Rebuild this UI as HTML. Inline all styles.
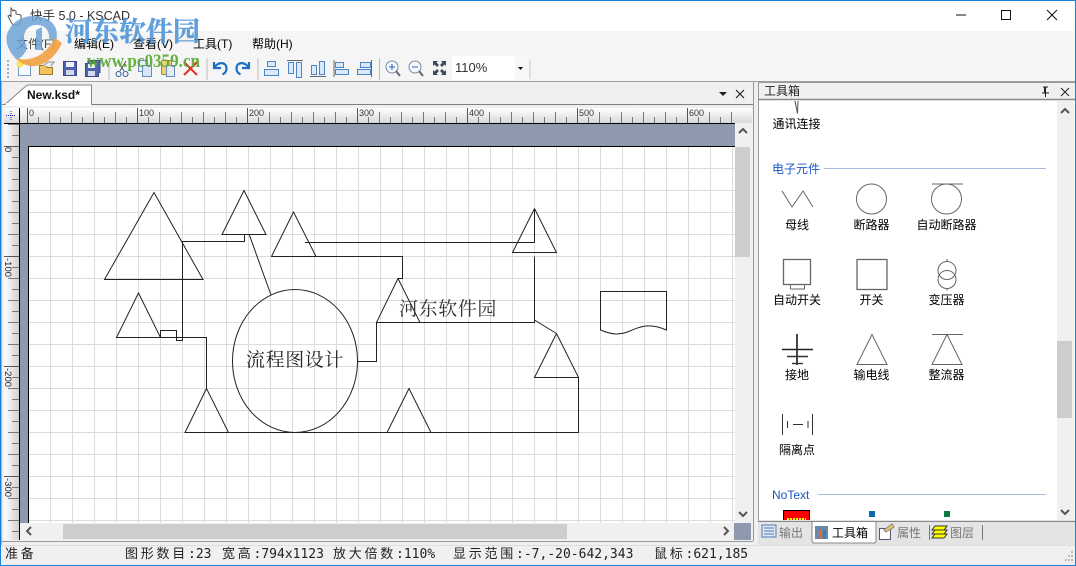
<!DOCTYPE html>
<html><head><meta charset="utf-8"><style>
html,body{margin:0;padding:0;background:#fff;width:1076px;height:566px;overflow:hidden}
svg{display:block}
text{font-family:"Liberation Sans","WenQuanYi Zen Hei","Noto Sans CJK SC",sans-serif;font-size:12px;fill:#000}
.m{font-family:"DejaVu Sans Mono","Liberation Mono","WenQuanYi Zen Hei",monospace;font-size:13px;fill:#222}
.z{letter-spacing:2.750px}
.s{fill:none;stroke:#222;stroke-width:1}
.i{fill:none;stroke:#666;stroke-width:1}
.c{text-anchor:middle}
</style></head><body>
<svg width="1076" height="566" viewBox="0 0 1076 566" xmlns="http://www.w3.org/2000/svg">
<defs>
<linearGradient id="rt" x1="0" y1="0" x2="0" y2="1"><stop offset="0" stop-color="#fff"/><stop offset="1" stop-color="#d8d8d8"/></linearGradient>
<linearGradient id="rl" x1="0" y1="0" x2="1" y2="0"><stop offset="0" stop-color="#fff"/><stop offset="1" stop-color="#d0d0d0"/></linearGradient>
<pattern id="grid" x="29" y="147" width="22" height="22" patternUnits="userSpaceOnUse"><rect x="21" y="0" width="1" height="22" fill="#dcdcdc"/><rect x="0" y="21" width="22" height="1" fill="#dcdcdc"/></pattern>
</defs>

<!-- window -->
<rect width="1076" height="566" fill="#f0f0f0"/>
<rect x="0" y="0" width="1076" height="31" fill="#fff"/>
<rect x="0" y="31" width="1076" height="50" fill="#f5f5f5"/>
<rect x="0" y="81" width="1076" height="1" fill="#a0a0a0"/>

<!-- title -->
<path d="M11,8v9l-1-2-2,1 3,6 2,3h6l2-4v-6l-5-1v-3l-2-1-1,1z" fill="#fff" stroke="#555"/>
<text x="30" y="20" style="font-size:12.500px;fill:#333">快手 5.0 - KSCAD</text>
<path d="M956,15h10" stroke="#111" stroke-width="1"/>
<rect x="1001.500" y="10.500" width="9" height="9" fill="none" stroke="#111"/>
<path d="M1047,10l10,10M1057,10l-10,10" stroke="#111" fill="none"/>

<!-- menu -->
<text x="16" y="48" style="fill:#444">文件(F)</text>
<text x="74" y="48">编辑(E)</text>
<text x="133" y="48">查看(V)</text>
<text x="193" y="48">工具(T)</text>
<text x="252" y="48">帮助(H)</text>

<!-- toolbar -->
<path d="M8,60v18" stroke="#aaa" stroke-width="2" stroke-dasharray="2 2"/>
<path d="M18.500,61.500h9l3,3v11h-12z" fill="#f4f8ff" stroke="#7a9cc8"/><circle cx="20" cy="64" r="3.500" fill="#ffe35a"/>
<path d="M39.500,65.500h6l2,2h5v7h-13z" fill="#f2c25c" stroke="#9a7a2a"/><path d="M43,66l5-4h6l-3,4" fill="#eee" stroke="#888"/>
<path d="M63.500,61.500h13v14h-13z" fill="#4f62ae" stroke="#3a4a88"/><rect x="66" y="62" width="8" height="5" fill="#eef1fb"/><rect x="66" y="70" width="8" height="5" fill="#d5d9ee"/>
<path d="M85.500,63.500h13v13h-13z" fill="#4f62ae" stroke="#3a4a88"/><path d="M88,63v-2.500h12v12h-2" fill="#4f62ae" stroke="#3a4a88"/><rect x="88" y="64" width="7" height="4" fill="#eef1fb"/><rect x="88" y="71" width="7" height="5" fill="#d5d9ee"/>
<path d="M109,58v22" stroke="#bbb"/>
<path d="M118,61l6,10M126,61l-6,10" stroke="#555" fill="none"/><circle cx="118.500" cy="74" r="2.500" fill="none" stroke="#2a5a9a"/><circle cx="125.500" cy="74" r="2.500" fill="none" stroke="#2a5a9a"/>
<rect x="138.500" y="60.500" width="9" height="11" fill="#e8f0fa" stroke="#6a8ab8"/><rect x="142.500" y="65.500" width="9" height="11" fill="#d8e6f8" stroke="#6a8ab8"/>
<rect x="161.500" y="60.500" width="10" height="14" rx="1" fill="#f0d070" stroke="#a08a30"/><rect x="166.500" y="65.500" width="8" height="11" fill="#e0ecfa" stroke="#6a8ab8"/>
<path d="M184,62l13,13M197,62l-13,13" stroke="#e03020" stroke-width="2" fill="none"/>
<path d="M207,58v22" stroke="#bbb"/>
<path d="M214,62v6h7M214.500,67.500c3-6 12-6 12,1 0,3-2,5-4,6" fill="none" stroke="#1f6fc0" stroke-width="2.200"/>
<path d="M249,62v6h-7M248.500,67.500c-3-6-12-6-12,1 0,3 2,5 4,6" fill="none" stroke="#1f6fc0" stroke-width="2.200"/>
<path d="M258,58v22" stroke="#bbb"/>
<g fill="#dbe9fa" stroke="#4a86c8">
<rect x="267.500" y="61.500" width="8" height="5"/><rect x="264.500" y="69.500" width="14" height="6"/>
<rect x="288.500" y="62.500" width="5" height="11"/><rect x="296.500" y="62.500" width="5" height="15"/>
<rect x="311.500" y="65.500" width="5" height="9"/><rect x="319.500" y="61.500" width="5" height="13"/>
<rect x="335.500" y="62.500" width="8" height="5"/><rect x="335.500" y="69.500" width="13" height="5"/>
<rect x="360.500" y="62.500" width="10" height="5"/><rect x="357.500" y="69.500" width="13" height="5"/>
</g>
<path d="M287,60.500h16M310,76.500h16M334,60v17M371.500,60v17" stroke="#666" fill="none"/>
<path d="M379.500,58v22" stroke="#bbb"/>
<circle cx="392" cy="67" r="6" fill="#f4f8ff" stroke="#7a8aa0"/><path d="M389,67h6M392,64v6" stroke="#2a5ab0"/><path d="M396,71l4,5" stroke="#667" stroke-width="2"/>
<circle cx="415" cy="67" r="6" fill="#f4f8ff" stroke="#7a8aa0"/><path d="M412,67h6" stroke="#2a5ab0"/><path d="M419,71l4,5" stroke="#667" stroke-width="2"/>
<path d="M433,61h5l-1.500,1.500 2.500,2.500-2,2-2.500-2.500-1.500,1.500zM446,61h-5l1.500,1.500-2.500,2.500 2,2 2.500-2.500 1.500,1.500zM433,75h5l-1.500-1.500 2.500-2.500-2-2-2.500,2.500-1.500-1.500zM446,75h-5l1.500-1.500-2.500-2.500 2-2 2.500,2.500 1.500-1.500z" fill="#3e4a56"/>
<rect x="452" y="56" width="76" height="24" fill="#fff"/>
<rect x="515" y="56" width="13" height="24" fill="#f7f7f7"/>
<text x="455" y="72" style="font-size:13px;fill:#333">110%</text>
<path d="M518,67h5l-2.500,3z" fill="#111"/>
<path d="M530,60v19" stroke="#ccc"/>

<!-- doc area -->
<rect x="2" y="105" width="751" height="436" fill="#f0f0f0"/>
<rect x="19" y="123" width="716" height="400" fill="#8f99ae"/>
<rect x="29" y="147" width="706" height="376" fill="#fff"/>
<rect x="29" y="147" width="706" height="376" fill="url(#grid)"/>
<path d="M19,123.500H735M28.500,146V523M28,146.500H735" stroke="#000" fill="none"/>

<!-- tab strip -->
<path d="M91.500,104.500H753" stroke="#808080" fill="none"/>
<path d="M2,104.500H5L26,86q1-1 3-1H91.500v19.500" fill="#fff" stroke="#888"/>
<rect x="6" y="103" width="85" height="3" fill="#fff"/>
<text x="27" y="99" style="font-weight:bold;font-size:12px;fill:#111">New.ksd*</text>
<path d="M719,92h8l-4,4z" fill="#222"/>
<path d="M736,90l8,8M744,90l-8,8" stroke="#222" stroke-width="1.200" fill="none"/>

<!-- rulers -->
<rect x="4" y="108" width="748" height="15" fill="url(#rt)"/>
<rect x="4" y="123" width="15" height="417" fill="url(#rl)"/>
<path d="M19.500,108V540M4,123.500H752" stroke="#000"/>
<path d="M11,111v10M6,115.500h10" stroke="#2222bb" stroke-dasharray="1 1" fill="none"/>
<path d="M27.500,108v15M137.500,108v15M247.500,108v15M357.500,108v15M467.500,108v15M577.500,108v15M687.500,108v15" stroke="#555"/>
<path d="M49.500,112v11M71.500,112v11M93.500,112v11M115.500,112v11M159.500,112v11M181.500,112v11M203.500,112v11M225.500,112v11M269.500,112v11M291.500,112v11M313.500,112v11M335.500,112v11M379.500,112v11M401.500,112v11M423.500,112v11M445.500,112v11M489.500,112v11M511.500,112v11M533.500,112v11M555.500,112v11M599.500,112v11M621.500,112v11M643.500,112v11M665.500,112v11M709.500,112v11M731.500,112v11" stroke="#777"/>
<path d="M38.500,117v6M60.500,117v6M82.500,117v6M104.500,117v6M126.500,117v6M148.500,117v6M170.500,117v6M192.500,117v6M214.500,117v6M236.500,117v6M258.500,117v6M280.500,117v6M302.500,117v6M324.500,117v6M346.500,117v6M368.500,117v6M390.500,117v6M412.500,117v6M434.500,117v6M456.500,117v6M478.500,117v6M500.500,117v6M522.500,117v6M544.500,117v6M566.500,117v6M588.500,117v6M610.500,117v6M632.500,117v6M654.500,117v6M676.500,117v6M698.500,117v6M720.500,117v6" stroke="#777"/>
<text x="29" y="116" style="font-size:9px;fill:#333">0</text><text x="139" y="116" style="font-size:9px;fill:#333">100</text><text x="249" y="116" style="font-size:9px;fill:#333">200</text><text x="359" y="116" style="font-size:9px;fill:#333">300</text><text x="469" y="116" style="font-size:9px;fill:#333">400</text><text x="579" y="116" style="font-size:9px;fill:#333">500</text><text x="689" y="116" style="font-size:9px;fill:#333">600</text>
<path d="M4,146.500h15M4,256.500h15M4,366.500h15M4,476.500h15" stroke="#555"/>
<path d="M8,124.500h11M8,168.500h11M8,190.500h11M8,212.500h11M8,234.500h11M8,278.500h11M8,300.500h11M8,322.500h11M8,344.500h11M8,388.500h11M8,410.500h11M8,432.500h11M8,454.500h11M8,498.500h11M8,520.500h11" stroke="#777"/>
<path d="M12,135.500h7M12,157.500h7M12,179.500h7M12,201.500h7M12,223.500h7M12,245.500h7M12,267.500h7M12,289.500h7M12,311.500h7M12,333.500h7M12,355.500h7M12,377.500h7M12,399.500h7M12,421.500h7M12,443.500h7M12,465.500h7M12,487.500h7M12,509.500h7M12,531.500h7" stroke="#777"/>
<text transform="translate(5,147) rotate(90)" style="font-size:9.500px;fill:#222">0</text>
<text transform="translate(5,258) rotate(90)" style="font-size:9.500px;fill:#222">-100</text>
<text transform="translate(5,368) rotate(90)" style="font-size:9.500px;fill:#222">-200</text>
<text transform="translate(5,478) rotate(90)" style="font-size:9.500px;fill:#222">-300</text>

<!-- shapes -->
<g class="s">
<path d="M154,192.500L104.500,279.500H203Z"/>
<path d="M244,190.500L222,234.500H266Z"/>
<path d="M182.500,341V241.500H244.500V234"/>
<path d="M249,234L271,295"/>
<path d="M293.500,212L271.500,256.500H316Z"/>
<path d="M305,242.500H534.500V208.500L512.500,252.500H556.500L534.500,208.500"/>
<path d="M271.500,256.500H402.500V278.500H398"/>
<path d="M398,278.500L376.500,322.500H420Z"/>
<path d="M358,361.500H376.500V322.500H534.500V256.500"/>
<path d="M534.500,320L556.500,333.500L534.500,377.500H578.500V432.500H185"/>
<path d="M556.500,333.500L578.500,377.500"/>
<path d="M138.500,293L116.500,337.500H160.500Z"/>
<path d="M116.500,337.500H206.500V388.500"/>
<path d="M160.500,337V330.500H176.500V340.500H182.500"/>
<path d="M206.500,388.500L185,432.500H228.500Z"/>
<path d="M409,388.500L387,432.500H431Z"/>
<ellipse cx="295" cy="361" rx="62.500" ry="71.500"/>
<path d="M600.500,330V291.500H666.500V330C650,323 641,326 630,331 618,336 610,334 600.500,330Z"/>
</g>
<text x="246" y="366" style="font-family:'Noto Serif CJK SC',serif;font-size:19px;fill:#222;letter-spacing:.6px">流程图设计</text>
<text x="399" y="315" style="font-family:'Noto Serif CJK SC',serif;font-size:19px;fill:#333;letter-spacing:.6px">河东软件园</text>

<!-- main scrollbars -->
<rect x="735" y="123" width="17" height="400" fill="#f0f0f0"/>
<rect x="735" y="147" width="15" height="110" fill="#cdcdcd"/>
<path d="M739,133l4-4 4,4" fill="none" stroke="#555" stroke-width="2"/>
<path d="M739,512l4,4 4-4" fill="none" stroke="#555" stroke-width="2"/>
<rect x="20" y="523" width="714" height="17" fill="#f0f0f0"/>
<rect x="63" y="524" width="504" height="15" fill="#cdcdcd"/>
<path d="M31,527l-4,4 4,4" fill="none" stroke="#555" stroke-width="2"/>
<path d="M724,527l4,4-4,4" fill="none" stroke="#555" stroke-width="2"/>
<rect x="734" y="523" width="17" height="17" fill="#8f99ae"/>
<path d="M2,541.500H753" stroke="#999"/>
<path d="M753.500,82V541" stroke="#999"/>

<!-- right panel -->
<rect x="758" y="82" width="318" height="439" fill="#fff"/>
<rect x="759" y="83" width="316" height="17" fill="#f0f0f0"/>
<path d="M758.500,82V521M758,82.500H1075" stroke="#999" fill="none"/>
<path d="M758,99.500H1075" stroke="#888" stroke-width="1.500"/>
<text x="764" y="95" style="fill:#222">工具箱</text>
<path d="M1044.500,87v6M1045.500,87v6M1043,87h5M1042,93h7M1045.500,93v4" stroke="#222" fill="none"/>
<path d="M1061,88l8,8M1069,88l-8,8" stroke="#222" fill="none"/>
<rect x="1057" y="101" width="17" height="419" fill="#f0f0f0"/>
<rect x="1057" y="341" width="15" height="77" fill="#cdcdcd"/>
<path d="M1061,113l4-4 4,4" fill="none" stroke="#555" stroke-width="2"/>
<path d="M1061,510l4,4 4-4" fill="none" stroke="#555" stroke-width="2"/>

<path d="M795,101l2.500,12.500L798,101" fill="none" stroke="#555"/>
<text x="796.500" y="128" class="c">通讯连接</text>
<text x="772" y="173" style="fill:#1a56c4">电子元件</text>
<path d="M824,168.500H1046" stroke="#a9bde0"/>

<g class="i">
<path d="M782,191l10,16 11-16 10,16"/>
<circle cx="871.500" cy="199" r="15"/>
<path d="M932,184h31"/><circle cx="946.500" cy="199" r="15"/>
<rect x="783.500" y="259.500" width="27" height="25" stroke-width="1.300"/><path d="M790.500,284.500v4.500h14v-4.500"/>
<rect x="857" y="259.500" width="30" height="30" stroke-width="1.300"/>
<circle cx="947" cy="270.500" r="9"/><circle cx="947" cy="279.500" r="9"/><path d="M947,259v2M947,288.500v2"/>
<path d="M782,349.500h31" stroke="#222" stroke-width="1.400"/><path d="M797,334v31" stroke="#333" stroke-width="1.800"/><path d="M787,356.500h21" stroke="#333" stroke-width="1.400"/><path d="M792,363.500h11" stroke="#333" stroke-width="1.400"/>
<path d="M872,334.500L857,364.500H887Z"/>
<path d="M932,334.500h31M947,334.500L932,364.500H962Z"/>
<path d="M782.500,414v21M787.500,421v7M793,424.500h10M808,421v7M812.500,414v21" stroke="#333"/>
</g>
<text x="797" y="229" class="c">母线</text><text x="871.500" y="229" class="c">断路器</text><text x="946.500" y="229" class="c">自动断路器</text>
<text x="797" y="304" class="c">自动开关</text><text x="871.500" y="304" class="c">开关</text><text x="946.500" y="304" class="c">变压器</text>
<text x="797" y="379" class="c">接地</text><text x="871.500" y="379" class="c">输电线</text><text x="946.500" y="379" class="c">整流器</text>
<text x="797" y="454" class="c">隔离点</text>
<text x="772" y="499" style="fill:#1a56c4">NoText</text>
<path d="M818,494.500H1046" stroke="#a9bde0"/>
<rect x="783" y="510" width="27" height="10" fill="#f00"/><path d="M783,510.500h27M783.500,510v10M809.500,510v10" stroke="#000"/><path d="M787,519h19" stroke="#ff0" stroke-dasharray="2 1" stroke-width="2"/>
<rect x="869" y="511" width="6" height="6" fill="#0a6ab0"/>
<rect x="944" y="511" width="6" height="6" fill="#0a7a40"/>
<path d="M758,521.500H1075" stroke="#888" stroke-width="1.500"/>

<!-- bottom tabs -->
<rect x="758" y="522" width="318" height="23" fill="#e4e4e4"/>
<rect x="762" y="525" width="14" height="12" fill="#dfe8f6" stroke="#5577aa"/><path d="M764,528h10M764,531h10M764,534h10" stroke="#5577aa"/>
<text x="779" y="537" style="fill:#777">输出</text>
<path d="M812,522V541q0,2 2,2H874q2,0 2-2V522" fill="#fff" stroke="#888"/>
<rect x="815" y="526" width="13" height="13" fill="#6a8aa8"/><rect x="819" y="530" width="3" height="9" fill="#e86a20"/><rect x="823" y="530" width="3" height="9" fill="#3a7ac0"/>
<text x="832" y="537">工具箱</text>
<rect x="879.500" y="528.500" width="11" height="11" fill="#fff" stroke="#557"/><path d="M884,530l8-6 2,3-8,5z" fill="#e8c870" stroke="#887"/>
<text x="897" y="537" style="fill:#777">属性</text>
<path d="M929.500,525v15M982.500,525v15" stroke="#777"/>
<path d="M932,530l3-4h12l-3,4zM932,534l3-4h12l-3,4zM932,538l3-4h12l-3,4z" fill="#ff0" stroke="#333"/>
<text x="950" y="537" style="fill:#777">图层</text>

<!-- status -->
<rect x="2" y="545" width="1074" height="20" fill="#f0f0f0"/>
<path d="M0,545.500H1076" stroke="#ddd"/>
<text x="5" y="558" class="m"><tspan class="z">准备</tspan></text>
<text x="125" y="558" class="m"><tspan class="z">图形数目</tspan>:23</text>
<text x="222" y="558" class="m"><tspan class="z">宽高</tspan>:794x1123</text>
<text x="333" y="558" class="m"><tspan class="z">放大倍数</tspan>:110%</text>
<text x="453" y="558" class="m"><tspan class="z">显示范围</tspan>:-7,-20-642,343</text>
<text x="654" y="558" class="m"><tspan class="z">鼠标</tspan>:621,185</text>
<path d="M1071,552h2M1068,556h2M1071,556h2M1065,560h2M1068,560h2M1071,560h2" stroke="#bbb" stroke-width="2"/>

<!-- watermark -->
<g>
<path d="M17,60C7,50 3,38 10,28 17,17 33,13 45,18 55,22 60,32 55,44L49,38C50,30 43,24 35,25 26,26 21,36 26,44 28,49 25,55 17,60Z" fill="#6fa3d6" opacity=".85"/>
<path d="M36,30v20h6V27z" fill="#6fa3d6" opacity=".85"/>
<path d="M15,58C28,62 44,58 55,38L62,43C54,60 42,67 30,66 24,65 19,62 15,58Z" fill="#f2a244" opacity=".92"/>
<text x="65" y="41" style="font-family:'Noto Serif CJK SC',serif;font-weight:bold;font-size:27px;fill:#4f95d6;stroke:#4f95d6;stroke-width:.4px" opacity=".9">河东软件园</text>
<text x="87" y="67" textLength="113" lengthAdjust="spacingAndGlyphs" style="font-family:'Liberation Serif',serif;font-weight:bold;font-size:19px;fill:#5aab35" opacity=".92">www.pc0359.cn</text>
</g>

<!-- frame -->
<path d="M0,.5H1076" stroke="#1a82d6"/>
<path d="M.5,0V566M1075.500,0V566M0,565.500H1076" stroke="#1a82d6"/>
<path d="M1.500,82V545" stroke="#7ab8ea"/>
</svg>
</body></html>
